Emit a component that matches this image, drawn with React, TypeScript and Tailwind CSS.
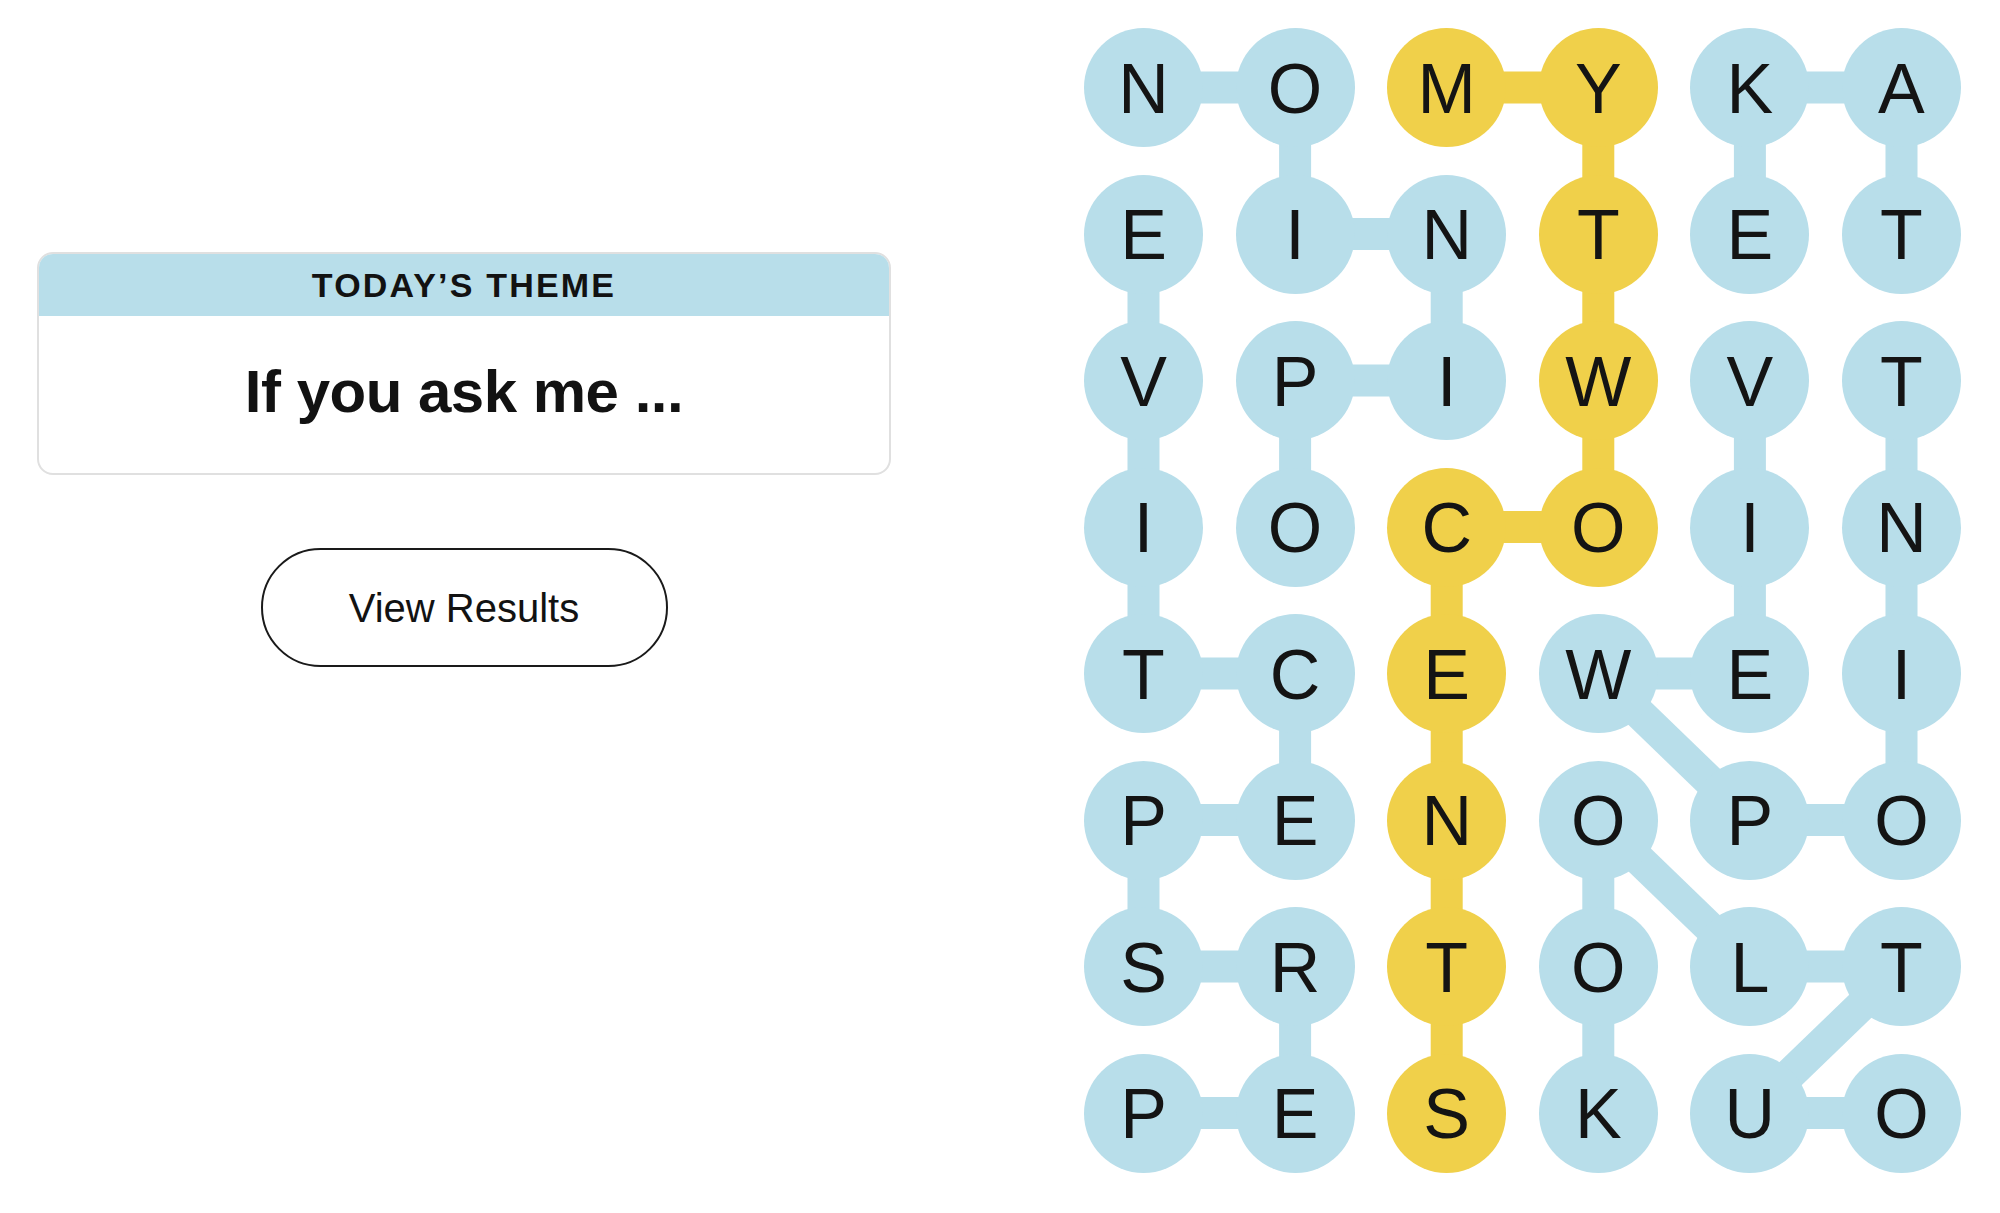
import React from 'react';

const BLUE = '#b8deea';
const YELLOW = '#f0d04a';

const LETTERS = [
  'NOMYKA',
  'EINTET',
  'VPIWVT',
  'IOCOIN',
  'TCEWEI',
  'PENOPO',
  'SRTOLT',
  'PESKUO',
];

// spangram cells: MY TWO CENTS
const SPANGRAM = ['0,2', '0,3', '1,3', '2,3', '3,3', '3,2', '4,2', '5,2', '6,2', '7,2'];

// found words, each a path of [row, col]
const WORDS: { path: [number, number][]; span?: boolean }[] = [
  // OPINION
  { path: [[3, 1], [2, 1], [2, 2], [1, 2], [1, 1], [0, 1], [0, 0]] },
  // PERSPECTIVE
  { path: [[7, 0], [7, 1], [6, 1], [6, 0], [5, 0], [5, 1], [4, 1], [4, 0], [3, 0], [2, 0], [1, 0]] },
  // TAKE
  { path: [[1, 5], [0, 5], [0, 4], [1, 4]] },
  // VIEWPOINT
  { path: [[2, 4], [3, 4], [4, 4], [4, 3], [5, 4], [5, 5], [4, 5], [3, 5], [2, 5]] },
  // OUTLOOK
  { path: [[7, 5], [7, 4], [6, 5], [6, 4], [5, 3], [6, 3], [7, 3]] },
  // MYTWOCENTS
  { path: [[0, 2], [0, 3], [1, 3], [2, 3], [3, 3], [3, 2], [4, 2], [5, 2], [6, 2], [7, 2]], span: true },
];

const CELL = 119;
const COL_STEP = 151.6;
const ROW_STEP = 146.5;

function center(r: number, c: number) {
  return { x: c * COL_STEP + CELL / 2, y: r * ROW_STEP + CELL / 2 };
}

function Board() {
  const width = 5 * COL_STEP + CELL;
  const height = 7 * ROW_STEP + CELL;

  return (
    <div className="relative" style={{ width, height }}>
      {/* connectors under the letters */}
      <svg className="absolute inset-0" width={width} height={height}>
        {WORDS.map((w, i) =>
          w.path.slice(1).map(([r, c], j) => {
            const a = center(w.path[j][0], w.path[j][1]);
            const b = center(r, c);
            return (
              <line
                key={`${i}-${j}`}
                x1={a.x}
                y1={a.y}
                x2={b.x}
                y2={b.y}
                stroke={w.span ? YELLOW : BLUE}
                strokeWidth={32}
              />
            );
          })
        )}
      </svg>

      <div className="relative grid grid-cols-[repeat(6,119px)] grid-rows-[repeat(8,119px)] gap-x-[32.6px] gap-y-[27.5px]">
        {LETTERS.map((row, r) =>
          row.split('').map((ch, c) => {
            const span = SPANGRAM.includes(`${r},${c}`);
            return (
              <div
                key={`${r}-${c}`}
                className={
                  'flex h-[119px] w-[119px] items-center justify-center rounded-full text-[70px] leading-none text-[#141414] ' +
                  (span ? 'bg-[#f0d04a]' : 'bg-[#b8deea]')
                }
              >
                <span className="translate-y-[1px]">{ch}</span>
              </div>
            );
          })
        )}
      </div>
    </div>
  );
}

export default function App() {
  return (
    <div
      className="flex min-h-screen w-full justify-between bg-white pr-[39px] pl-[37px] text-[#121212]"
      style={{ fontFamily: '"Liberation Sans", Arial, sans-serif' }}
    >
      {/* Left side - theme card and results button */}
      <section className="flex w-[854px] flex-col items-center pt-[252px]">
        <div className="w-full overflow-hidden rounded-[16px] border-2 border-[#e0e0e0]">
          <div className="flex h-[64px] items-center justify-center bg-[#b8deea] -mx-[2px] -mt-[2px]">
            <span className="pt-[2px] text-[34px] font-bold tracking-[2.2px]">TODAY’S THEME</span>
          </div>
          <div className="flex h-[157px] items-center justify-center pb-[6px]">
            <span className="text-[60px] font-bold tracking-[-0.5px]">If you ask me ...</span>
          </div>
        </div>

        <button className="mt-[73px] flex h-[119px] w-[407px] items-center justify-center rounded-full border-2 border-[#1a1a1a] bg-white text-[40px]">
          View Results
        </button>
      </section>

      {/* Right side - letter board */}
      <section className="pt-[28px]">
        <Board />
      </section>
    </div>
  );
}
